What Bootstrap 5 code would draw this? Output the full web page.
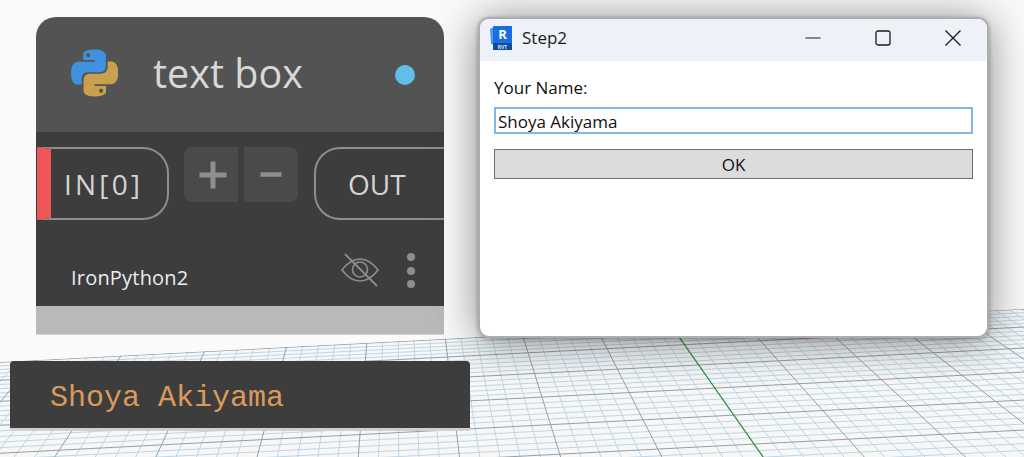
<!DOCTYPE html>
<html lang="en">
<head>
<meta charset="utf-8">
<title>Step2</title>
<link href="https://cdn.jsdelivr.net/npm/bootstrap@5.3.0/dist/css/bootstrap.min.css" rel="stylesheet">
<style>
html,body{margin:0;height:100%;}
body{background:#fafafa;font-family:"Open Sans","Noto Sans",sans-serif;overflow:hidden;}
.stage{position:relative;width:1024px;height:457px;overflow:hidden;}
.gridlayer{position:absolute;left:0;top:0;width:1024px;height:457px;}
.node{position:absolute;left:36px;top:17px;width:408px;height:318px;border-radius:20px 20px 0 0;overflow:hidden;}
.node-head{height:115px;background:#535353;padding:0 29px 0 35px;}
.py-icon{width:47px;height:48px;filter:blur(.7px);flex:none;margin-top:-4px;}
.node-title{font-size:39.500px;line-height:1;color:#d8d8d8;margin-left:35px;font-weight:400;margin-top:-2px;}
.status-dot{width:20px;height:20px;border-radius:50%;background:#62bee9;margin-left:auto;}
.node-body{height:174px;background:#3d3d3d;}
.ports{padding-top:15px;height:103px;}
.port{height:73px;border:2px solid #8e8e8e;color:#d4d4d4;font-size:28px;font-weight:400;}
.port-in{width:132px;margin-left:1px;border-left:14px solid #ef5757;border-radius:0 26px 26px 0;padding-left:13px;letter-spacing:3.200px;}
.port-out{width:130px;margin-left:16px;border-right:0;border-radius:26px 0 0 26px;padding-left:32px;}
.pm-group{margin-left:15px;gap:6px;}
.pm{width:54px;height:55px;background:#4a4a4a;color:#8f8f8f;}
.pm svg{width:28px;height:28px;}
.pm-plus{margin-left:4px;}
.pm-left{border-radius:8px 0 0 8px;}
.pm-right{border-radius:0 8px 8px 0;}
.node-foot{padding:0 29px 0 35px;height:71px;}
.engine{font-size:20px;letter-spacing:.2px;color:#ececec;margin-top:15px;}
.eye{width:38px;height:36px;margin-left:auto;margin-right:28px;margin-top:-2px;flex:none;}
.dots{margin-top:6px;}
.dots i{display:block;width:8px;height:8px;margin-bottom:5.500px;border-radius:50%;background:#8e8e8e;}
.node-strip{height:29px;background:#b9b9b9;border-bottom:1px solid #d4d4d4;}
.note{position:absolute;left:10px;top:361px;width:460px;height:70px;background:#3d3d3d;border-radius:4px 4px 0 0;border-bottom:3px solid #cfcfcf;color:#dc9a5a;font-family:"Liberation Mono",monospace;font-size:30px;padding:8px 0 0 40px;}
.win{position:absolute;left:478px;top:17px;width:511px;height:321px;background:#fff;border:2px solid #adadad;border-radius:11px;overflow:hidden;}
.win-shadow{position:absolute;left:478px;top:17px;width:511px;height:321px;border-radius:11px;box-shadow:0 3px 44px rgba(0,0,0,.46),0 1px 4px rgba(0,0,0,.3);}
.win-title{height:42px;background:#eef2f8;padding:0 0 4px 10px;}
.rvt{width:22px;height:24px;flex:none;}
.win-name{font-size:17px;color:#1a1a1a;margin-left:10px;}
.win-ctrl{margin-left:auto;margin-right:-1px;}
.ctrl-btn{width:70px;height:38px;}
.ctrl-btn svg{width:18px;height:18px;}
.win-body{padding:16px 14px 0 14px;font-size:17px;color:#111;}
.win-label{display:block;margin:0 0 8px 0;line-height:22px;font-size:17px;}
.win-input.form-control{height:27px;padding:1px 2px 0 2px;border:2px solid #86b6e6;border-radius:0;font-size:17px;line-height:23px;color:#111;box-shadow:none;font-family:inherit;}
.win-btn.btn{height:30px;margin-top:15px;padding:0;background:#dcdcdc;border:1px solid #6d6d6d;border-radius:0;font-size:17px;color:#111;font-family:inherit;line-height:30px;}
</style>
</head>
<body>
<div class="stage">
  <svg class="gridlayer" id="grid" viewBox="0 0 1024 457" xmlns="http://www.w3.org/2000/svg">
    <defs><clipPath id="floor"><polygon points="0,362 1024,309 1024,457 0,457"/></clipPath></defs>
    <polygon points="0,362 1024,309 1024,457 0,457" fill="#f7f7f7"/>
    <g id="gridlines" clip-path="url(#floor)" fill="none"></g>
  </svg>

  <div class="node">
    <div class="node-head d-flex align-items-center">
      <svg class="py-icon" viewBox="0 0 110 110" xmlns="http://www.w3.org/2000/svg">
        <path fill="#3f92dd" fill-rule="evenodd" d="M54.9 0C26.8 0 28.6 12.2 28.6 12.2l0 12.6h26.8v3.8H17.9S0 26.6 0 54.9s15.6 27.3 15.6 27.3h9.3V69s-.5-15.6 15.4-15.6h26.5s14.9.2 14.9-14.4V14.8S84 0 54.9 0zM40.1 8.5a4.8 4.8 0 1 1 0 9.6 4.8 4.8 0 0 1 0-9.6z"/>
        <path fill="#c9a04f" fill-rule="evenodd" d="M55.7 110c28.1 0 26.3-12.2 26.3-12.2l0-12.6H55.2v-3.8h37.5s17.9 2 17.9-26.3-15.6-27.3-15.6-27.3h-9.3V41s.5 15.6-15.4 15.6H44.3s-14.9-.2-14.9 14.4v24.2S27.1 110 55.7 110zm14.8-8.5a4.8 4.8 0 1 1 0-9.6 4.8 4.8 0 0 1 0 9.6z"/>
      </svg>
      <div class="node-title">text box</div>
      <div class="status-dot"></div>
    </div>
    <div class="node-body">
      <div class="ports d-flex align-items-start">
        <div class="port port-in d-flex align-items-center">IN[0]</div>
        <div class="pm-group d-flex">
          <div class="pm pm-left d-flex align-items-center justify-content-center">
            <svg class="pm-plus" viewBox="0 0 28 28"><path d="M14 .5v27M.5 14h27" stroke="#8f8f8f" stroke-width="5" fill="none"/></svg>
          </div>
          <div class="pm pm-right d-flex align-items-center justify-content-center">
            <svg viewBox="0 0 28 28"><path d="M3.500 13.500h21" stroke="#8f8f8f" stroke-width="4.500" fill="none"/></svg>
          </div>
        </div>
        <div class="port port-out d-flex align-items-center">OUT</div>
      </div>
      <div class="node-foot d-flex align-items-center">
        <div class="engine">IronPython2</div>
        <svg class="eye" viewBox="0 0 38 36" xmlns="http://www.w3.org/2000/svg" fill="none" stroke="#8e8e8e" stroke-width="1.600">
          <path d="M1 18C7 10 13 7 19 7s12 3 18 11c-6 8-12 11-18 11S7 26 1 18z"/>
          <circle cx="19" cy="17.500" r="7.500"/>
          <path d="M4 2l32 32" stroke-width="1.800"/>
        </svg>
        <div class="dots d-flex flex-column"><i></i><i></i><i></i></div>
      </div>
    </div>
    <div class="node-strip"></div>
  </div>

  <div class="note d-flex align-items-center">Shoya Akiyama</div>

  <div class="win-shadow"></div>
  <div class="win">
    <div class="win-title d-flex align-items-center">
      <svg class="rvt" viewBox="0 0 22 24" xmlns="http://www.w3.org/2000/svg">
        <path d="M0 3L5 0h17v19H4l-3-1z" fill="#5b95e6"/>
        <rect x="3" y="0" width="19" height="17" rx="1" fill="#1a6fe0"/>
        <rect x="3" y="17" width="19" height="7" fill="#124a9e"/>
        <text x="12.500" y="13" font-family="'Open Sans',sans-serif" font-size="13" font-weight="700" fill="#fff" text-anchor="middle">R</text>
        <text x="12.500" y="22.800" font-family="'Open Sans',sans-serif" font-size="5" font-weight="700" fill="#dfe8f5" text-anchor="middle">RVT</text>
      </svg>
      <span class="win-name">Step2</span>
      <div class="win-ctrl d-flex">
        <div class="ctrl-btn d-flex align-items-center justify-content-center"><svg viewBox="0 0 18 18"><path d="M1.500 9h15" stroke="#1a1a1a" stroke-width="1.200" fill="none"/></svg></div>
        <div class="ctrl-btn d-flex align-items-center justify-content-center"><svg viewBox="0 0 18 18"><rect x="2" y="2" width="14" height="14" rx="2" stroke="#1a1a1a" stroke-width="1.300" fill="none"/></svg></div>
        <div class="ctrl-btn d-flex align-items-center justify-content-center"><svg viewBox="0 0 18 18"><path d="M1.500 1.500l15 15M16.500 1.500l-15 15" stroke="#1a1a1a" stroke-width="1.300" fill="none"/></svg></div>
      </div>
    </div>
    <div class="win-body">
      <label class="win-label" for="nm">Your Name:</label>
      <input id="nm" class="form-control win-input" type="text" value="Shoya Akiyama">
      <button class="btn win-btn w-100 d-block" type="button">OK</button>
    </div>
  </div>
</div>
<script>
(function(){
  var NS='http://www.w3.org/2000/svg',g=document.getElementById('gridlines');
  function line(x1,y1,x2,y2,c,w){var l=document.createElementNS(NS,'line');l.setAttribute('x1',x1);l.setAttribute('y1',y1);l.setAttribute('x2',x2);l.setAttribute('y2',y2);l.setAttribute('stroke',c);l.setAttribute('stroke-width',w);g.appendChild(l);}
  var minor='#bdd6e5',major='#939fa8',green='#2c8c36';
  var maj=[311,329,347,368,392,420,450,484];
  var i,j,n;
  for(i=0;i<maj.length-1;i++){for(j=1;j<5;j++){var y=maj[i]+(maj[i+1]-maj[i])*j/5;line(0,y+640*0.052,1024,y-384*0.052,minor,1);}}
  var vx=397,vy=-66,unit=0.1935;
  for(n=-60;n<=60;n++){if(n%5===0)continue;var s=0.7+unit*n/5;line(vx,vy,vx+s*600,vy+600,minor,1);}
  for(i=0;i<maj.length;i++){var yy=maj[i];line(0,yy+640*0.052,1024,yy-384*0.052,major,1);}
  for(n=-12;n<=12;n++){if(n===0)continue;var t=0.7+unit*n;line(vx,vy,vx+t*600,vy+600,major,1);}
  line(vx,vy,vx+0.7*600,vy+600,green,1.2);
})();
</script>
<script src="https://cdn.jsdelivr.net/npm/bootstrap@5.3.0/dist/js/bootstrap.bundle.min.js"></script>
</body>
</html>
